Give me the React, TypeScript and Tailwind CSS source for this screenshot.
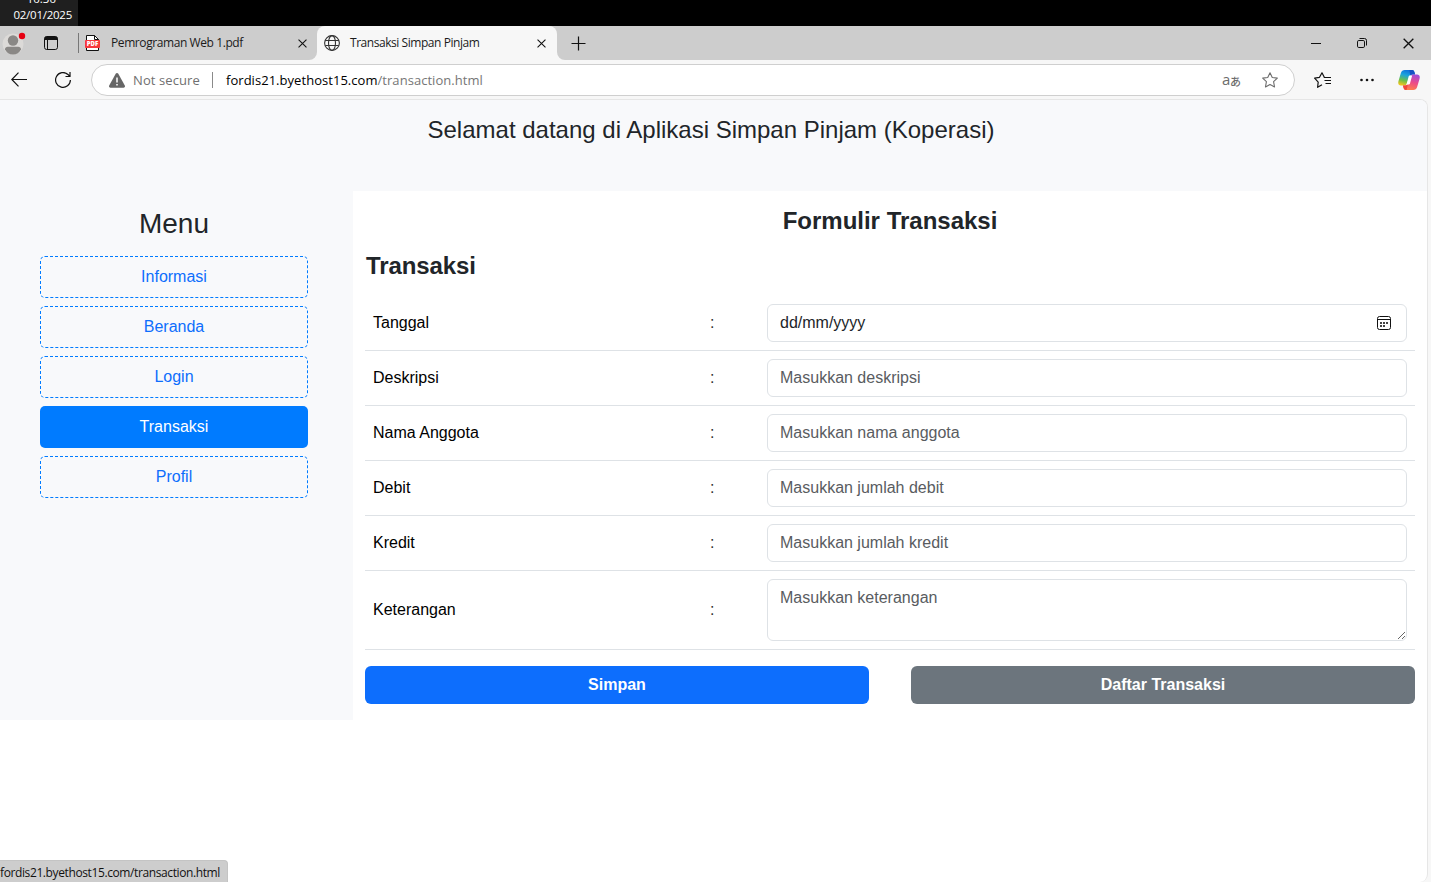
import type { ReactNode } from 'react';

const uiFont = "font-['Open_Sans','Noto_Sans',sans-serif]";

const menu = ['Informasi', 'Beranda', 'Login', 'Transaksi', 'Profil'];

const fields = [
  { label: 'Deskripsi', placeholder: 'Masukkan deskripsi' },
  { label: 'Nama Anggota', placeholder: 'Masukkan nama anggota' },
  { label: 'Debit', placeholder: 'Masukkan jumlah debit' },
  { label: 'Kredit', placeholder: 'Masukkan jumlah kredit' },
];

function Cross({ className }: { className: string }) {
  return (
    <svg className={className} viewBox="0 0 10 10" stroke="#111" strokeWidth="1.2" fill="none">
      <path d="M0.6 0.6 9.4 9.4M9.4 0.6 0.6 9.4" />
    </svg>
  );
}

function ProfileIcon() {
  return (
    <svg className="ml-[2px] h-[24px] w-[24px] shrink-0" viewBox="0 0 24 24">
      <circle cx="11" cy="13" r="10.5" fill="#dcdad8" />
      <circle cx="11" cy="9.5" r="5.200" fill="#8a8886" />
      <path d="M3 18.200c0-1.600 1.200-2.500 2.800-2.500h10.400c1.600 0 2.800.9 2.800 2.500C17.500 21.600 14.700 23.500 11 23.500s-6.500-1.900-8-5.300z" fill="#8a8886" />
      <circle cx="20" cy="5" r="3.2" fill="#e60012" />
    </svg>
  );
}

function WorkspaceIcon() {
  return (
    <svg className="ml-[18px] h-[14px] w-[14px] shrink-0" viewBox="0 0 14 14">
      <rect x="0.5" y="0.5" width="13" height="13" rx="2.2" fill="none" stroke="#111" />
      <path d="M0.5 4V2.600a2 2 0 0 1 2-2h9a2 2 0 0 1 2 2V4z" fill="#111" />
      <path d="M3.500 4v9.400" stroke="#111" />
    </svg>
  );
}

function PdfIcon() {
  return (
    <svg className="ml-[6px] h-[16px] w-[15px] shrink-0" viewBox="0 0 15 16">
      <path d="M1.5 0.5h8l4 4v11h-12z" fill="#fff" stroke="#111" />
      <path d="M9.5 0.5v4h4z" fill="#fff" stroke="#111" />
      <rect y="5" width="15" height="8" rx="0.8" fill="#f8383c" />
      <text x="7.5" y="11.2" textAnchor="middle" fontFamily="Open Sans" fontSize="6" fontWeight="800" fill="#fff">PDF</text>
    </svg>
  );
}

function GlobeIcon() {
  return (
    <svg className="h-[16px] w-[16px] shrink-0" viewBox="0 0 16 16" fill="none" stroke="#333" strokeWidth="1.1">
      <circle cx="8" cy="8" r="7.4" />
      <ellipse cx="8" cy="8" rx="3.5" ry="7.4" />
      <path d="M1.3 5.5h13.4M1.3 10.5h13.4" />
    </svg>
  );
}

function TranslateIcon() {
  return (
    <span className="flex h-[18px] w-[18px] shrink-0 items-center whitespace-nowrap text-[#6c6c6c]">
      <span className="w-[8px] pb-[2px] text-[15px] leading-[14px]">a</span>
      <span className="w-[11px] pt-[1px] font-['Noto_Sans_CJK_JP',sans-serif] text-[11px] font-medium leading-[14px]">あ</span>
    </span>
  );
}

function CopilotIcon() {
  return (
    <svg className="ml-[24px] h-[22px] w-[22px] shrink-0" viewBox="0 0 22 22">
      <defs>
        <linearGradient id="cpLeft" x1="0.6" y1="0" x2="0.3" y2="1">
          <stop offset="0" stopColor="#0d6fdc" />
          <stop offset="0.35" stopColor="#1ba4dc" />
          <stop offset="0.7" stopColor="#6cc04a" />
          <stop offset="1" stopColor="#f0c51c" />
        </linearGradient>
        <linearGradient id="cpRight" x1="0.7" y1="0" x2="0.4" y2="1">
          <stop offset="0" stopColor="#a24bd8" />
          <stop offset="0.5" stopColor="#ec4b88" />
          <stop offset="1" stopColor="#ff8048" />
        </linearGradient>
      </defs>
      <path d="M6.8 1h7.4c1.2 0 1.8.8 2.2 2l.7 2.6h-2.3c-1.7 0-2.6.8-3.1 2.5L8.600 15c-.5 1.200-1 1.400-1.800 1.400H3c-2.300 0-3.300-1.700-2.500-4.500l2.300-7.700C3.500 2 4.800 1 6.800 1z" fill="url(#cpLeft)" />
      <path d="M11.5 1h2.7c1.2 0 1.8.8 2.2 2l.7 2.6h-2.300c-1.200 0-2 .5-2.500 1.300z" fill="#1650c4" />
      <path d="M15.2 21H7.800c-1.200 0-1.800-.8-2.200-2l-.7-2.600h2.300c1.700 0 2.600-.8 3.100-2.500L12.400 8c.5-1.600 1.300-2.400 2.800-2.400H19c2.300 0 3.300 1.700 2.500 4.500l-2.300 7.700c-.7 2.200-2 3.200-4 3.200z" fill="url(#cpRight)" />
      <path d="M7.800 21c-1.200 0-1.800-.8-2.200-2l-.7-2.600h2.300c1.400 0 2.200-.5 2.800-1.700L8.600 21z" fill="#f0483c" />
      <path d="M11.800 6.600h2.400L11.900 14.800c-.2.500-.6.8-1.100.8H8.500L10.500 8c.2-.8.600-1.400 1.300-1.400z" fill="#fff" />
    </svg>
  );
}

function TabStrip() {
  return (
    <div className="flex h-[34px] items-stretch bg-[#cdcdcd]">
      <div className="flex w-[317px] shrink-0 bg-[#f7f7f7]">
        <div className="flex w-[317px] items-center rounded-br-[8px] bg-[#cdcdcd]">
          <ProfileIcon />
          <WorkspaceIcon />
          <span className="ml-[20px] h-[20px] w-px bg-[#777]" />
          <PdfIcon />
          <span className="ml-[11px] w-[150px] whitespace-nowrap text-[12px] tracking-[-0.41px] text-[#1b1b1b]">Pemrograman Web 1.pdf</span>
          <Cross className="ml-[37px] h-[9px] w-[9px]" />
        </div>
      </div>
      <div className="flex w-[240px] shrink-0 items-center rounded-t-[8px] bg-[#f7f7f7] pl-[7px]">
        <GlobeIcon />
        <span className="ml-[10px] w-[150px] whitespace-nowrap text-[12px] tracking-[-0.45px] text-[#1b1b1b]">Transaksi Simpan Pinjam</span>
        <Cross className="ml-[37px] h-[9px] w-[9px]" />
      </div>
      <div className="flex grow bg-[#f7f7f7]">
        <div className="flex grow items-center rounded-bl-[8px] bg-[#cdcdcd] pl-[14px]">
          <svg className="h-[15px] w-[15px]" viewBox="0 0 15 15" stroke="#111" strokeWidth="1.2">
            <path d="M7.5 0.5v14M0.5 7.5h14" />
          </svg>
          <span className="ml-auto h-px w-[10px] bg-[#111]" />
          <svg className="ml-[36px] h-[10px] w-[10px]" viewBox="0 0 10 10" fill="none" stroke="#111">
            <rect x="0.5" y="2.5" width="7" height="7" rx="1.3" />
            <path d="M2.5 0.5h5a2 2 0 0 1 2 2v5" />
          </svg>
          <Cross className="ml-[36px] mr-[17px] h-[11px] w-[11px]" />
        </div>
      </div>
    </div>
  );
}

function Toolbar() {
  return (
    <div className="flex h-[39px] items-center bg-[#f7f7f7] pt-px">
      <svg className="ml-[11px] h-[16px] w-[16px] shrink-0" viewBox="0 0 16 16" fill="none" stroke="#111" strokeWidth="1.2">
        <path d="M16 7.5H0.8M7.5 0.700 0.8 7.500l6.700 6.800" />
      </svg>
      <svg className="ml-[28px] h-[16px] w-[16px] shrink-0" viewBox="0 0 16 16" fill="none" stroke="#111" strokeWidth="1.2">
        <path d="M15.4 8A7.4 7.4 0 1 1 13 2.5L14.8 4.3M15 0v4.5h-4.5" />
      </svg>
      <div className="ml-[20px] flex h-[32px] w-[1204px] shrink-0 items-center rounded-full border border-[#cfcfcf] bg-white">
        <svg className="ml-[17px] h-[15px] w-[16px] shrink-0" viewBox="0 0 16 15">
          <path d="M6.700 0.800a1.500 1.500 0 0 1 2.600 0l6.500 11.800a1.500 1.500 0 0 1-1.300 2.200h-13A1.500 1.500 0 0 1 .2 12.600z" fill="#666" />
          <path d="M8 4.500v5M8 11v1.600" stroke="#fff" strokeWidth="1.500" />
        </svg>
        <span className="ml-[8px] w-[79px] whitespace-nowrap pt-px text-[13px] tracking-[0.1px] text-[#707070]">Not secure</span>
        <span className="h-[16px] w-px bg-[#8a8a8a]" />
        <span className="ml-[13px] whitespace-nowrap pt-px text-[13px] tracking-[0.04px] text-[#767676]"><span className="text-black">fordis21.byethost15.com</span>/transaction.html</span>
        <span className="ml-auto flex items-center">
          <TranslateIcon />
          <svg className="ml-[22px] mr-[16px] h-[16px] w-[16px] shrink-0" viewBox="0 0 17 17" fill="none" stroke="#6c6c6c" strokeWidth="1.15" strokeLinejoin="round">
            <path d="m8.5 0.8 2.4 5 5.400.700-4 3.800 1 5.600-4.800-2.700-4.800 2.700 1-5.600-4-3.800 5.400-.700z" />
          </svg>
        </span>
      </div>
      <svg className="ml-[19px] h-[16px] w-[17px] shrink-0" viewBox="0 0 17 16" fill="none" stroke="#111" strokeWidth="1.2" strokeLinejoin="round">
        <path d="M10.3 5.3 8 0.8 5.5 5.3.6 6.2l3.600 3.900-.6 5.200 4.400-2.600M9.800 5.500h7.200M10.500 8.500H17M11.500 11.500H17" />
      </svg>
      <svg className="ml-[29px] h-[4px] w-[14px] shrink-0" viewBox="0 0 14 4" fill="#111">
        <circle cx="1.5" cy="2" r="1.3" />
        <circle cx="7" cy="2" r="1.3" />
        <circle cx="12.5" cy="2" r="1.3" />
      </svg>
      <CopilotIcon />
    </div>
  );
}

function Row({ label, children, last }: { label: string; children: ReactNode; last?: boolean }) {
  return (
    <div className={`flex items-center border-b border-[#dee2e6] p-[8px] ${last ? 'h-[79px]' : 'h-[55px]'}`}>
      <span className="w-[337px] text-black">{label}</span>
      <span className="w-[57px] text-[#333]">:</span>
      {children}
    </div>
  );
}

const control = 'w-[640px] rounded-[6px] border border-[#dee2e6] bg-white px-[12px] text-[16px] leading-[24px] text-[#212529] placeholder:text-[#595c5f] outline-none';

export default function App() {
  return (
    <div className="relative flex h-[882px] w-[1431px] flex-col overflow-hidden bg-[#f7f7f7]">
      <div className={`flex shrink-0 flex-col ${uiFont}`}>
        <div className="flex h-[26px] bg-black">
          <div className="flex h-[26px] w-[78px] flex-col items-end justify-end overflow-hidden bg-[#1f1f1f] pr-[6px] text-[11.5px] text-white">
            <span className="mr-[16px] h-[16px] shrink-0 leading-[16px]">10:30</span>
            <span className="mb-[3px] h-[16px] shrink-0 whitespace-nowrap leading-[16px] tracking-[-0.25px]">02/01/2025</span>
          </div>
        </div>
        <TabStrip />
        <Toolbar />
      </div>
      <div className="flex h-[783px] w-[1428px] flex-col overflow-hidden rounded-r-[8px] border-r border-t border-[#e6e6e6] bg-white font-['Liberation_Sans',Arial,sans-serif] text-[16px] leading-[24px] text-[#212529]">
        <header className="h-[91px] shrink-0 bg-[#f8f9fb] pt-[15px] text-center">
          <h1 className="ml-[-5px] text-[24px] leading-[29px]">Selamat datang di Aplikasi Simpan Pinjam (Koperasi)</h1>
        </header>
        <div className="flex h-[529px] shrink-0">
          <aside className="w-[353px] shrink-0 bg-[#f8f9fb] pl-[40px] pt-[16px]">
            <h2 className="w-[268px] text-center text-[28px] leading-[33px]">Menu</h2>
            <nav className="mt-[16px] flex w-[268px] flex-col gap-[8px]">
              {menu.map((item) => (
                <a
                  key={item}
                  className={
                    item === 'Transaksi'
                      ? 'flex h-[42px] items-center justify-center rounded-[5px] bg-[#007bff] pb-px text-white'
                      : 'flex h-[42px] items-center justify-center rounded-[5px] border border-dashed border-[#007bff] pb-px text-[#0d6efd]'
                  }
                >
                  {item}
                </a>
              ))}
            </nav>
          </aside>
          <main className="w-[1074px] px-[12px] pt-[15px]">
            <h2 className="text-center text-[24px] font-bold leading-[29px]">Formulir Transaksi</h2>
            <h3 className="mt-[16px] pl-px text-[24px] font-bold leading-[29px] tracking-[-0.1px]">Transaksi</h3>
            <div className="mt-[16px]">
              <Row label="Tanggal">
                <div className={`flex h-[38px] items-center justify-between pr-[15px] ${control}`}>
                  <span>dd/mm/yyyy</span>
                  <svg className="h-[14px] w-[14px]" viewBox="0 0 14 14">
                    <rect x="0.5" y="0.5" width="13" height="13" rx="2" fill="none" stroke="#111" />
                    <path d="M0.5 3.5h13" stroke="#111" />
                    <path d="M3 6h2v2H3zM6 6h2v2H6zM9 6h2v2H9zM3 9h2v2H3zM6 9h2v2H6z" fill="#444" />
                  </svg>
                </div>
              </Row>
              {fields.map((f) => (
                <Row key={f.label} label={f.label}>
                  <input className={`h-[38px] ${control}`} placeholder={f.placeholder} />
                </Row>
              ))}
              <Row label="Keterangan" last>
                <textarea className={`h-[62px] resize-y py-[6px] ${control}`} placeholder="Masukkan keterangan" />
              </Row>
            </div>
            <div className="mt-[16px] flex justify-between font-bold text-white">
              <button className="h-[38px] w-[504px] rounded-[6px] bg-[#0d6efd]">Simpan</button>
              <button className="h-[38px] w-[504px] rounded-[6px] bg-[#6c757d]">Daftar Transaksi</button>
            </div>
          </main>
        </div>
      </div>
      <div className={`absolute bottom-0 left-0 flex h-[22px] w-[228px] items-center whitespace-nowrap rounded-tr-[4px] border-r border-t border-[#c4c4c4] bg-[#cdcdcd] pt-[2px] text-[12px] tracking-[-0.39px] text-[#111] ${uiFont}`}>
        fordis21.byethost15.com/transaction.html
      </div>
    </div>
  );
}
